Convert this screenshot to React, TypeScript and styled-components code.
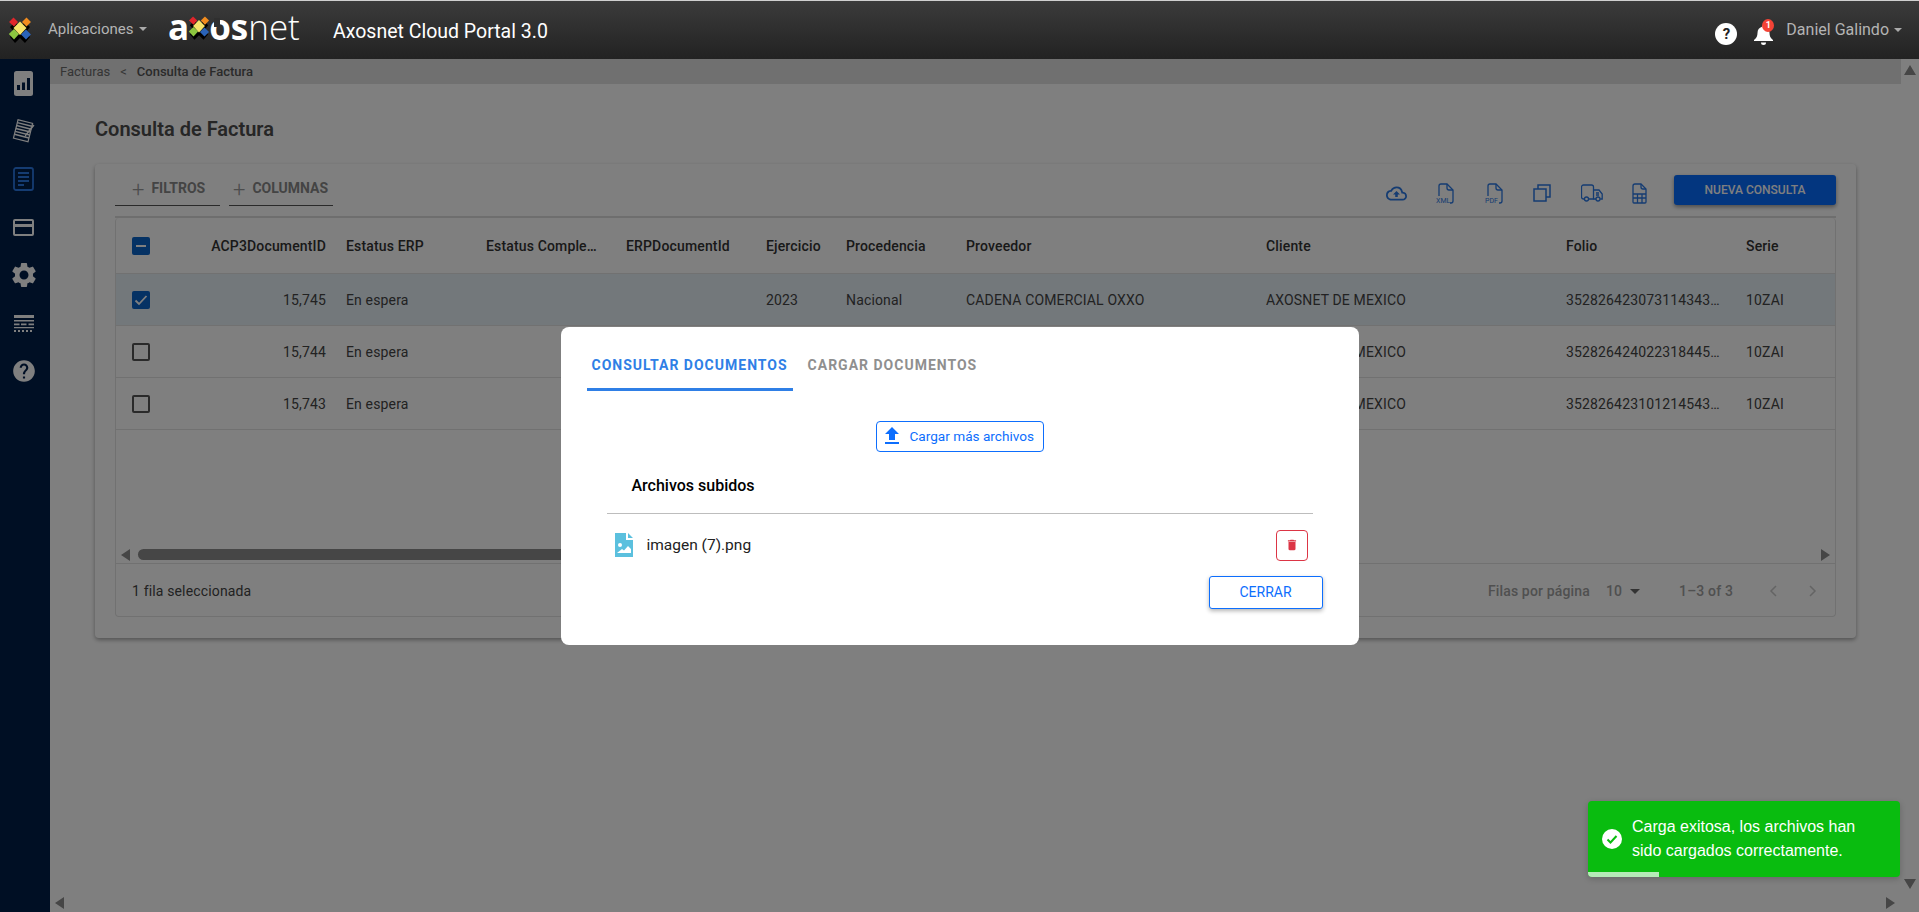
import React from "react";
import styled, { createGlobalStyle } from "styled-components";
import { MdDelete, MdFileUpload, MdHelp, MdOutlineCloudUpload, MdSettings } from "react-icons/md";

const GlobalStyle = createGlobalStyle`
    html, body {
        margin: 0;
        height: 100%;
        overflow: hidden;
        background: #fff;
        font-family: Roboto, "Liberation Sans", sans-serif;
    }
    * {
        box-sizing: border-box;
    }
`;

const COLUMNS = "72px 148px 140px 140px 140px 80px 120px 300px 300px 180px 100px";

const rows = [
    { id: "15,745", folio: "352826423073114343…", selected: true },
    { id: "15,744", folio: "352826424022318445…", selected: false },
    { id: "15,743", folio: "352826423101214543…", selected: false },
];

function LogoMark({ size }: { size: number }) {
    return (
        <svg width={size} height={size * 1.08} viewBox="0 0 24 26">
            <path d="M6 3l5 5 5-5 5 5-4 5 4 5-5 6-5-5-5 5-5-6 4-5-4-5z" transform="translate(1 2)" fill="#000" />
            <path d="M5.5.5L10 5l-4 4.5L1 5z" fill="#e0252b" />
            <path d="M18.5.5L23 5l-4.500 4.500L14 5z" fill="#f28c1e" />
            <path d="M6 12l5 5-5 5.500L.8 17z" fill="#8cc63f" />
            <path d="M18 12.500l5 5-5 5-5-5z" fill="#2a63b8" />
            <path d="M12 4.500l6.500 6.500-6.500 7-6.500-7z" fill="#f6e36a" />
        </svg>
    );
}

function ChartIcon() {
    return (
        <svg width="19" height="25" viewBox="0 0 19 25">
            <rect width="19" height="25" rx="2.500" fill="#fff" />
            <path d="M3 14h3v5H3zM8 11.500h3V19H8zM13 7h3v12h-3z" fill="#001e48" />
        </svg>
    );
}

function NotesIcon() {
    return (
        <svg width="24" height="24" viewBox="0 0 24 24">
            <g transform="rotate(14 12 12)" fill="none" stroke="#fff">
                <rect x="3.500" y="2.500" width="15" height="19" fill="#001e48" strokeWidth="1.200" />
                <path d="M3.500 5.500h15M3.500 8.500h15M3.500 11.500h15M3.500 14.500h15M3.500 17.500h15" strokeWidth="1.500" />
            </g>
            <path d="M22.500 6.500L14 17l-1.500 1.500.5-2.500L21 5.500z" fill="#fff" />
        </svg>
    );
}

function DocumentIcon() {
    return (
        <svg width="21" height="24" viewBox="0 0 21 24" fill="none" stroke="#2a78e4">
            <rect x="1" y="1" width="19" height="22" rx="2" strokeWidth="1.800" />
            <path d="M5 6h11M5 10h11M5 14h11M5 18h6" strokeWidth="1.800" />
        </svg>
    );
}

function CardIcon() {
    return (
        <svg width="21" height="17" viewBox="0 0 21 17">
            <path d="M2 0h17a2 2 0 0 1 2 2v13a2 2 0 0 1-2 2H2a2 2 0 0 1-2-2V2a2 2 0 0 1 2-2zm0 2v3h17V2zm0 6v7h17V8z" fill="#fff" fillRule="evenodd" />
        </svg>
    );
}

function GridIcon() {
    return (
        <svg width="20" height="17" viewBox="0 0 20 17" fill="#fff">
            <path d="M0 0h20v3H0zM0 5h20v1.500H0zM0 8.500h5.500v1.800H0zM7 8.500h5.500v1.800H7zM14.500 8.500H20v1.800h-5.500zM0 12h20v1.200H0z" />
            <path d="M0 15h2v2H0zM4 15h2v2H4zM8 15h2v2H8zM12 15h2v2h-2zM16 15h2v2h-2z" />
        </svg>
    );
}

function FileIcon({ label }: { label: string }) {
    return (
        <svg width="19" height="21" viewBox="0 0 19 21" fill="none" stroke="#2a78e4" strokeWidth="1.300">
            <path d="M3 13V3a2 2 0 0 1 2-2h6l6 6v11a2 2 0 0 1-2 2h-1" />
            <path d="M11 1v4a2 2 0 0 0 2 2h4" />
            <text x="0" y="20" fontSize="7" fill="#2a78e4" stroke="none" fontFamily="Roboto, sans-serif">
                {label}
            </text>
        </svg>
    );
}

function CopyIcon() {
    return (
        <svg width="18" height="18" viewBox="0 0 18 18" fill="none" stroke="#2a78e4" strokeWidth="1.500">
            <rect x="1" y="5" width="12" height="12" />
            <path d="M5 5V1h12v12h-4" />
        </svg>
    );
}

function TruckIcon() {
    return (
        <svg width="22" height="18" viewBox="0 0 22 18" fill="none" stroke="#2a78e4" strokeWidth="1.300">
            <path d="M3.500 15H2.500a2 2 0 0 1-2-2V3a2 2 0 0 1 2-2h8a2 2 0 0 1 2 2v12H7" />
            <path d="M12.500 6H18l3.200 4v5h-2M15 15h-2.500" />
            <path d="M15 9h3M15 11h3" />
            <circle cx="5.500" cy="15" r="2" />
            <circle cx="17" cy="15" r="2" />
        </svg>
    );
}

function SheetIcon() {
    return (
        <svg width="15" height="21" viewBox="0 0 15 21" fill="none" stroke="#2a78e4" strokeWidth="1.300">
            <path d="M1 19V3a2 2 0 0 1 2-2h6l5 5v13a1 1 0 0 1-1 1H2a1 1 0 0 1-1-1z" />
            <path d="M9 1v3a2 2 0 0 0 2 2h3" />
            <path d="M1 11h13M1 15h13M5.500 11v9M10 11v9" />
        </svg>
    );
}

function ImageFileIcon() {
    return (
        <svg width="18" height="24" viewBox="0 0 18 24">
            <path d="M0 0h11v7h7v17H0zM13 0l5 5h-5z" fill="#5bc0de" />
            <circle cx="5" cy="12" r="2" fill="#fff" />
            <path d="M2 20l5-4 2 1.500 4-4.500 3 3v4z" fill="#fff" />
        </svg>
    );
}

function CheckCircle() {
    return (
        <svg width="20" height="20" viewBox="0 0 20 20" style={{ flex: "none" }}>
            <circle cx="10" cy="10" r="10" fill="#fff" />
            <path d="M5.500 10.500l3 3 6-6.500" fill="none" stroke="#09bc0f" strokeWidth="2" />
        </svg>
    );
}

function BellIcon() {
    return (
        <svg width="19" height="20" viewBox="0 0 19 20" fill="#fff">
            <path d="M9.500 0c.8 0 1.500.7 1.500 1.500v.3c3 .8 4.500 3.300 4.500 6.200 0 3 1 5 3.500 7v1H0v-1c2.500-2 3.500-4 3.500-7 0-2.900 1.500-5.400 4.500-6.200v-.3C8 .7 8.700 0 9.500 0z" />
            <path d="M7 17.500h5a2.500 2.500 0 0 1-5 0z" />
        </svg>
    );
}

function TableCheckbox({ state }: { state: "none" | "some" | "checked" }) {
    return (
        <CheckBox $on={state !== "none"}>
            {state === "some" && <svg width="18" height="18" viewBox="0 0 18 18"><path d="M4 9h10" stroke="#fff" strokeWidth="2" /></svg>}
            {state === "checked" && <svg width="18" height="18" viewBox="0 0 18 18"><path d="M3.500 9.500l3.500 3.500 7.500-8" fill="none" stroke="#fff" strokeWidth="1.800" /></svg>}
        </CheckBox>
    );
}

export default function App() {
    return (
        <Page>
            <GlobalStyle />
            <TopBar>
                <AppMark>
                    <LogoMark size={24} />
                </AppMark>
                <AppsMenu>Aplicaciones</AppsMenu>
                <Logo>
                    <LogoBold>a</LogoBold>
                    <LogoCross>
                        <LogoMark size={22} />
                    </LogoCross>
                    <LogoOpenO>o</LogoOpenO>
                    <LogoBold>s</LogoBold>
                    net
                </Logo>
                <PortalName>Axosnet Cloud Portal 3.0</PortalName>
                <TopRight>
                    <HelpBubble>?</HelpBubble>
                    <BellWrap>
                        <BellIcon />
                        <BellBadge>1</BellBadge>
                    </BellWrap>
                    <UserMenu>Daniel Galindo</UserMenu>
                </TopRight>
            </TopBar>
            <Body>
                <SideBar>
                    <SideItem><ChartIcon /></SideItem>
                    <SideItem><NotesIcon /></SideItem>
                    <SideItem><DocumentIcon /></SideItem>
                    <SideItem><CardIcon /></SideItem>
                    <SideItem><MdSettings size={30} color="#fff" /></SideItem>
                    <SideItem><GridIcon /></SideItem>
                    <SideItem><MdHelp size={26} color="#fff" /></SideItem>
                </SideBar>
                <Main>
                    <Crumbs>
                        <span>Facturas</span>
                        <CrumbSep>&lt;</CrumbSep>
                        <CrumbCurrent>Consulta de Factura</CrumbCurrent>
                    </Crumbs>
                    <Content>
                        <Title>Consulta de Factura</Title>
                        <Card>
                            <Toolbar>
                                <FilterTab $width={105} $inset={17}>
                                    <PlusSign>+</PlusSign>FILTROS
                                </FilterTab>
                                <FilterTab $width={104} $inset={4}>
                                    <PlusSign>+</PlusSign>COLUMNAS
                                </FilterTab>
                                <ToolIcons>
                                    <MdOutlineCloudUpload size={21} color="#2a78e4" />
                                    <FileIcon label="XML" />
                                    <FileIcon label="PDF" />
                                    <CopyIcon />
                                    <TruckIcon />
                                    <SheetIcon />
                                </ToolIcons>
                                <PrimaryButton>NUEVA CONSULTA</PrimaryButton>
                            </Toolbar>
                            <Table>
                                <HeaderRow>
                                    <CheckCell><TableCheckbox state="some" /></CheckCell>
                                    <Cell $right>ACP3DocumentID</Cell>
                                    <Cell>Estatus ERP</Cell>
                                    <Cell>Estatus Comple…</Cell>
                                    <Cell>ERPDocumentId</Cell>
                                    <Cell>Ejercicio</Cell>
                                    <Cell>Procedencia</Cell>
                                    <Cell>Proveedor</Cell>
                                    <Cell>Cliente</Cell>
                                    <Cell>Folio</Cell>
                                    <Cell>Serie</Cell>
                                </HeaderRow>
                                {rows.map((row) => (
                                    <DataRow key={row.id} $selected={row.selected}>
                                        <CheckCell><TableCheckbox state={row.selected ? "checked" : "none"} /></CheckCell>
                                        <Cell $right>{row.id}</Cell>
                                        <Cell>En espera</Cell>
                                        <Cell />
                                        <Cell />
                                        <Cell>2023</Cell>
                                        <Cell>Nacional</Cell>
                                        <Cell>CADENA COMERCIAL OXXO</Cell>
                                        <Cell>AXOSNET DE MEXICO</Cell>
                                        <Cell>{row.folio}</Cell>
                                        <Cell>10ZAI</Cell>
                                    </DataRow>
                                ))}
                                <TableSpace />
                                <TableScroll>
                                    <Arrow $dir="left" />
                                    <ScrollThumb />
                                    <Arrow $dir="right" />
                                </TableScroll>
                                <TableFooter>
                                    <span>1 fila seleccionada</span>
                                    <Pager>
                                        <span>Filas por página</span>
                                        <PageSize>10<Caret /></PageSize>
                                        <PageCount>1–3 of 3</PageCount>
                                        <PagerArrows>
                                            <svg width="8" height="12" viewBox="0 0 8 12"><path d="M7 1L2 6l5 5" fill="none" stroke="#c8c8c8" strokeWidth="1.500" /></svg>
                                            <svg width="8" height="12" viewBox="0 0 8 12"><path d="M1 1l5 5-5 5" fill="none" stroke="#c8c8c8" strokeWidth="1.500" /></svg>
                                        </PagerArrows>
                                    </Pager>
                                </TableFooter>
                            </Table>
                        </Card>
                    </Content>
                    <PageScrollX>
                        <Arrow $dir="left" />
                        <Arrow $dir="right" />
                    </PageScrollX>
                </Main>
                <PageScrollY>
                    <Arrow $dir="up" />
                    <Arrow $dir="down" />
                </PageScrollY>
            </Body>
            <Overlay>
                <Modal>
                    <Tabs>
                        <Tab $active>CONSULTAR DOCUMENTOS</Tab>
                        <Tab>CARGAR DOCUMENTOS</Tab>
                    </Tabs>
                    <UploadRow>
                        <UploadButton>
                            <MdFileUpload size={24} />
                            Cargar más archivos
                        </UploadButton>
                    </UploadRow>
                    <FilesHeading>Archivos subidos</FilesHeading>
                    <FileRow>
                        <ImageFileIcon />
                        <FileName>imagen (7).png</FileName>
                        <DeleteButton>
                            <MdDelete size={14} />
                        </DeleteButton>
                    </FileRow>
                    <ModalActions>
                        <CloseButton>CERRAR</CloseButton>
                    </ModalActions>
                </Modal>
            </Overlay>
            <Toast>
                <CheckCircle />
                <ToastText>Carga exitosa, los archivos han sido cargados correctamente.</ToastText>
                <ToastProgress />
            </Toast>
        </Page>
    );
}

const Page = styled.div`
    position: relative;
    height: 100vh;
    display: flex;
    flex-direction: column;
    overflow: hidden;
`;

const TopBar = styled.header`
    height: 59px;
    flex: none;
    display: flex;
    align-items: center;
    padding-right: 17px;
    border-top: 1px solid #d0d0d0;
    background: linear-gradient(#3b3b3b, #222);
`;

const AppMark = styled.div`
    width: 48px;
    padding-left: 8px;
    display: flex;
`;

const CaretAfter = `
    &::after {
        content: "";
        display: inline-block;
        margin-left: 5px;
        vertical-align: 3px;
        border-top: 4px solid #aaa;
        border-left: 4px solid transparent;
        border-right: 4px solid transparent;
    }
`;

const AppsMenu = styled.div`
    width: 120px;
    color: #b4b4b4;
    font: 400 15px Roboto, sans-serif;
    margin-top: -2px;
    ${CaretAfter}
`;

const Logo = styled.div`
    width: 165px;
    display: flex;
    align-items: center;
    height: 30px;
    color: #fff;
    font: 300 35px/30px "Open Sans", sans-serif;
    margin-top: -6px;
`;

const LogoBold = styled.span`
    font-weight: 700;
`;

const LogoCross = styled.span`
    display: flex;
    margin: 2px -1px 0 -1px;
    position: relative;
    z-index: 1;
`;

const LogoOpenO = styled.span`
    position: relative;
    font-weight: 700;
    &::before {
        content: "";
        position: absolute;
        left: 5px;
        top: 6px;
        width: 6px;
        height: 9px;
        background: #2f2f2f;
    }
`;

const PortalName = styled.div`
    color: #fff;
    font: 400 19.5px Roboto, sans-serif;
    margin-top: 3px;
`;

const TopRight = styled.div`
    margin-left: auto;
    display: flex;
    align-items: center;
`;

const HelpBubble = styled.div`
    width: 22px;
    height: 22px;
    margin-top: 7px;
    border-radius: 50%;
    background: #fff;
    color: #222;
    font: 700 15px/22px Roboto, sans-serif;
    text-align: center;
`;

const BellWrap = styled.div`
    position: relative;
    display: flex;
    margin: 10px 0 0 17px;
`;

const BellBadge = styled.span`
    position: absolute;
    top: -6px;
    right: -1px;
    width: 12px;
    height: 13px;
    border-radius: 50%;
    background: #f44336;
    color: #fff;
    font: 700 9px/13px Roboto, sans-serif;
    text-align: center;
`;

const UserMenu = styled.div`
    margin-left: 13px;
    color: #b4b4b4;
    font: 400 16px Roboto, sans-serif;
    margin-top: -2px;
    ${CaretAfter}
`;

const Body = styled.div`
    flex: 1;
    min-height: 0;
    display: flex;
`;

const SideBar = styled.nav`
    width: 50px;
    flex: none;
    background: #001e48;
`;

const SideItem = styled.div`
    height: 48px;
    padding-right: 3px;
    display: flex;
    align-items: center;
    justify-content: center;
`;

const Main = styled.main`
    flex: 1;
    min-width: 0;
    display: flex;
    flex-direction: column;
`;

const Crumbs = styled.div`
    height: 25px;
    flex: none;
    padding-left: 10px;
    display: flex;
    align-items: center;
    background: #e0e0e0;
    color: #6a6a6a;
    font-size: 13px;
`;

const CrumbSep = styled.span`
    margin: 0 10px;
`;

const CrumbCurrent = styled.span`
    font-weight: 500;
    color: #555;
`;

const Content = styled.div`
    flex: 1;
    padding: 33px 45px 0;
`;

const Title = styled.h1`
    margin: 0;
    height: 47px;
    line-height: 24px;
    font-size: 20px;
    font-weight: 600;
    color: #4d4d4d;
`;

const Card = styled.section`
    height: 474px;
    padding: 0 20px;
    display: flex;
    flex-direction: column;
    background: #fff;
    border-radius: 4px;
    box-shadow: 0 2px 4px rgba(0, 0, 0, 0.35);
`;

const Toolbar = styled.div`
    height: 54px;
    flex: none;
    display: flex;
    align-items: flex-start;
    padding-top: 11px;
    border-bottom: 2px solid #dcdcdc;
`;

const FilterTab = styled.div<{ $width: number; $inset: number }>`
    width: ${(p) => p.$width}px;
    height: 31px;
    margin-right: 9px;
    padding: 0 0 5px ${(p) => p.$inset}px;
    display: flex;
    align-items: center;
    gap: 7px;
    border-bottom: 1px solid #555;
    color: #888;
    font-size: 14px;
    font-weight: 700;
    white-space: nowrap;
`;

const PlusSign = styled.span`
    color: #999;
    font-size: 22px;
    font-weight: 300;
    line-height: 20px;
    margin-top: 5px;
`;

const ToolIcons = styled.div`
    width: 261px;
    height: 30px;
    margin: 3px 27px 0 auto;
    display: flex;
    align-items: center;
    justify-content: space-between;
`;

const PrimaryButton = styled.button`
    width: 162px;
    height: 30px;
    border: none;
    border-radius: 3px;
    background: #066cff;
    color: #fff;
    font: 500 12px Roboto, sans-serif;
    box-shadow: 0 2px 4px rgba(0, 0, 0, 0.4);
`;

const Table = styled.div`
    flex: 1;
    display: flex;
    flex-direction: column;
    margin-bottom: 21px;
    border: 1px solid #e2e2e2;
    border-top: none;
    border-radius: 4px;
    font-size: 14px;
    letter-spacing: 0.15px;
`;

const HeaderRow = styled.div`
    display: grid;
    grid-template-columns: ${COLUMNS};
    height: 56px;
    flex: none;
    align-items: center;
    border-bottom: 1px solid #e2e2e2;
    color: #333;
    font-weight: 500;
`;

const DataRow = styled.div<{ $selected: boolean }>`
    display: grid;
    grid-template-columns: ${COLUMNS};
    height: 52px;
    flex: none;
    align-items: center;
    border-bottom: 1px solid #e2e2e2;
    background: ${(p) => (p.$selected ? "#e6f0f7" : "transparent")};
    color: #444;
`;

const CheckCell = styled.div`
    padding-left: 16px;
    display: flex;
`;

const Cell = styled.div<{ $right?: boolean }>`
    padding: 0 10px;
    white-space: nowrap;
    overflow: hidden;
    text-align: ${(p) => (p.$right ? "right" : "left")};
`;

const CheckBox = styled.span<{ $on: boolean }>`
    width: 18px;
    height: 18px;
    display: flex;
    border-radius: 2px;
    background: ${(p) => (p.$on ? "#0a64c8" : "transparent")};
    border: ${(p) => (p.$on ? "none" : "2px solid #555")};
`;

const TableSpace = styled.div`
    flex: 1;
`;

const TableScroll = styled.div`
    height: 15px;
    flex: none;
    padding: 0 5px;
    display: flex;
    align-items: flex-start;
    gap: 8px;
    border-bottom: 1px solid #e2e2e2;
    justify-content: space-between;
`;

const ScrollThumb = styled.div`
    flex: 1;
    max-width: 600px;
    height: 11px;
    margin-right: auto;
    border-radius: 6px;
    background: #8c8c8c;
`;

const TableFooter = styled.div`
    height: 52px;
    flex: none;
    padding: 2px 18px 0 16px;
    display: flex;
    align-items: center;
    justify-content: space-between;
    color: #444;
`;

const Pager = styled.div`
    display: flex;
    align-items: center;
    color: #a0a0a0;
    font-weight: 500;
`;

const PageSize = styled.span`
    margin-left: 16px;
    display: flex;
    align-items: center;
    gap: 8px;
`;

const Caret = styled.span`
    border-top: 5px solid #666;
    border-left: 5px solid transparent;
    border-right: 5px solid transparent;
`;

const PageCount = styled.span`
    margin-left: 39px;
`;

const PagerArrows = styled.span`
    margin-left: 36px;
    display: flex;
    gap: 32px;
`;

const arrowBorders = {
    up: "border-bottom: 10px solid #8c8c8c; border-left: 6px solid transparent; border-right: 6px solid transparent;",
    down: "border-top: 10px solid #8c8c8c; border-left: 6px solid transparent; border-right: 6px solid transparent;",
    left: "border-right: 9px solid #8c8c8c; border-top: 6px solid transparent; border-bottom: 6px solid transparent;",
    right: "border-left: 9px solid #8c8c8c; border-top: 6px solid transparent; border-bottom: 6px solid transparent;",
};

const Arrow = styled.span<{ $dir: keyof typeof arrowBorders }>`
    flex: none;
    width: 0;
    height: 0;
    ${(p) => arrowBorders[p.$dir]}
`;

const PageScrollX = styled.div`
    height: 17px;
    flex: none;
    padding: 2px 6px 0 5px;
    display: flex;
    justify-content: space-between;
`;

const PageScrollY = styled.div`
    width: 18px;
    flex: none;
    padding: 6px 0 23px;
    display: flex;
    flex-direction: column;
    align-items: center;
    justify-content: space-between;
`;

const Overlay = styled.div`
    position: absolute;
    top: 59px;
    left: 0;
    right: 0;
    bottom: 0;
    display: flex;
    align-items: center;
    justify-content: center;
    background: rgba(0, 0, 0, 0.5);
`;

const Modal = styled.div`
    width: 798px;
    height: 318px;
    padding: 16px 36px 0 26px;
    background: #fff;
    border-radius: 8px;
`;

const Tabs = styled.div`
    display: flex;
    gap: 10px;
    height: 48px;
`;

const Tab = styled.div<{ $active?: boolean }>`
    padding: 1px 5px 2px;
    display: flex;
    align-items: center;
    color: ${(p) => (p.$active ? "#2f7fe6" : "#8f8f8f")};
    border-bottom: 3px solid ${(p) => (p.$active ? "#2f7fe6" : "transparent")};
    font-size: 14px;
    font-weight: 700;
    letter-spacing: 1px;
`;

const UploadRow = styled.div`
    margin: 30px -10px 0 0;
    display: flex;
    justify-content: center;
`;

const UploadButton = styled.button`
    width: 168px;
    height: 31px;
    padding: 0 0 0 3px;
    display: flex;
    align-items: center;
    gap: 6px;
    background: #fff;
    border: 1px solid #0d6efd;
    border-radius: 4px;
    color: #0d6efd;
    font: 400 13.6px Roboto, sans-serif;
`;

const FilesHeading = styled.h3`
    margin: 18px 0 0 20px;
    width: 706px;
    height: 44px;
    padding: 6px 0 0 25px;
    border-bottom: 1px solid #bdbdbd;
    color: #000;
    font-size: 16px;
    font-weight: 500;
    line-height: 19px;
`;

const FileRow = styled.div`
    margin: 16px 0 0 28px;
    width: 693px;
    height: 31px;
    display: flex;
    align-items: center;
    gap: 14px;
`;

const FileName = styled.span`
    flex: 1;
    color: #222;
    font-size: 15.5px;
`;

const DeleteButton = styled.button`
    width: 32px;
    height: 31px;
    padding: 0;
    display: flex;
    align-items: center;
    justify-content: center;
    background: #fff;
    border: 1px solid #dc3545;
    border-radius: 4px;
    color: #dc3545;
`;

const ModalActions = styled.div`
    margin-top: 15px;
    display: flex;
    justify-content: flex-end;
`;

const CloseButton = styled.button`
    width: 114px;
    height: 33px;
    background: #fff;
    border: 1px solid #0d6efd;
    border-radius: 3px;
    color: #0d6efd;
    font: 400 14px Roboto, sans-serif;
    box-shadow: 0 2px 4px rgba(0, 0, 0, 0.3);
`;

const Toast = styled.div`
    position: absolute;
    left: 1588px;
    top: 801px;
    width: 312px;
    height: 76px;
    padding: 0 20px 0 14px;
    display: flex;
    align-items: center;
    gap: 10px;
    overflow: hidden;
    background: #09bc0f;
    border-radius: 4px;
    box-shadow: 0 2px 6px rgba(0, 0, 0, 0.2);
`;

const ToastText = styled.div`
    color: #fff;
    font: 400 16px/24px "Liberation Sans", Arial, sans-serif;
`;

const ToastProgress = styled.div`
    position: absolute;
    left: 0;
    bottom: 0;
    width: 71px;
    height: 5px;
    background: rgba(255, 255, 255, 0.7);
`;
